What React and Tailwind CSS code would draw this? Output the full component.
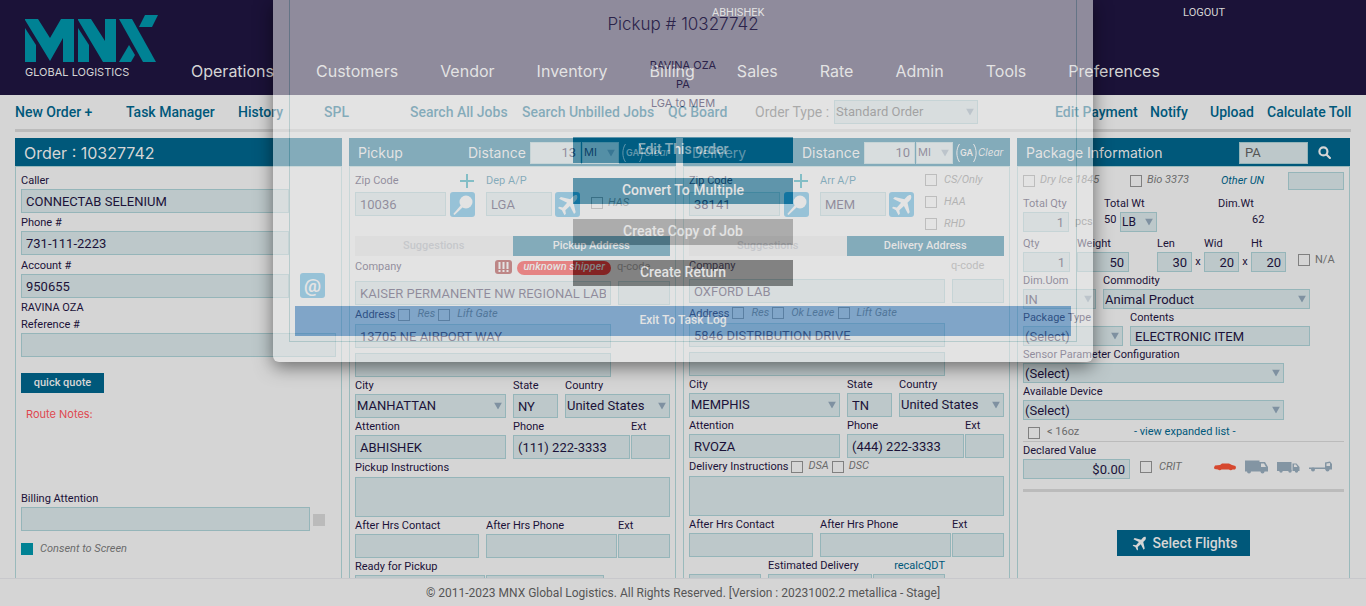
import React, { useId } from "react";

const box = "block w-full min-w-0 rounded-none border border-[#95b5b9] bg-[#bdc8ca] text-[13px] text-[#1b1238] outline-none";

function Label({ children, htmlFor, className = "text-[#1b1238]" }) {
  return (
    <label htmlFor={htmlFor} className={`flex h-[17px] items-center pt-[2px] text-[11px] whitespace-nowrap ${className}`}>
      {children}
    </label>
  );
}

function Text({ label, name, value = "", className = "", labelClass, h = "h-6", align = "px-1 text-left" }) {
  const id = useId();
  return (
    <div className={`min-w-0 ${className}`}>
      {label && <Label htmlFor={id} className={labelClass}>{label}</Label>}
      <input id={id} aria-label={name} defaultValue={value} className={`${box} ${h} ${align}`} />
    </div>
  );
}

function Select({ label, name, value, className = "", h = "h-6", color = "" }) {
  const id = useId();
  return (
    <div className={`min-w-0 ${className}`}>
      {label && <Label htmlFor={id}>{label}</Label>}
      <div className="relative">
        <select id={id} aria-label={name} className={`${box} ${h} appearance-none pl-px ${color}`}>
          <option>{value}</option>
        </select>
        <svg viewBox="0 0 8 7" className="pointer-events-none absolute top-1/2 right-1 h-[7px] w-2 -translate-y-1/2 fill-[#7f91a1]">
          <path d="M0 0h8L4 7z" />
        </svg>
      </div>
    </div>
  );
}

function Check({ label, className = "", italic = "italic", gap = "gap-[5px]" }) {
  return (
    <label className={`flex items-center text-[11px] whitespace-nowrap text-[#6b6b6b] ${italic} ${gap} ${className}`}>
      <input type="checkbox" className="h-3 w-3 shrink-0 appearance-none border border-[#808080]" />
      {label}
    </label>
  );
}

function Plane({ className }) {
  return (
    <svg viewBox="0 0 24 24" className={className} fill="currentColor" aria-hidden="true">
      <path d="M21.6 1.2c-1.300-.5-2.800.2-3.900 1.300L14.600 5.800 4.200 3.300 2.300 5.100l8.700 4.500-4.600 5-3.900-.6L1 15.400l4.400 2.200.5 1.100 2.300 4.400 1.500-1.500-.6-3.900 5-4.600 4.500 8.700 1.800-1.900-2.400-10.400 3.200-3.200c1.100-1.200 1.300-3.600.4-5.100z" />
    </svg>
  );
}

function Logo() {
  return (
    <svg viewBox="0 0 134 48" className="h-12 w-[134px]" fill="#008294" role="img" aria-label="MNX">
      <path d="M0 4h13l12 19L36 4h13v43H38V23L25 46 0 5z" />
      <path d="M0 13l11 17v17H0z" />
      <path d="M53 4h13l14 22V4h11v43H78L53 5z" />
      <path d="M53 13l11 17v17H53z" />
      <path d="M94 4h13l24 43h-13z" />
      <path d="M104 30l6 10-4 7H94z" />
      <path d="M120 0h13l-6 12h-13z" />
    </svg>
  );
}

function Magnifier() {
  return (
    <button aria-label="Look up zip code" className="h-[25px] w-[25px] shrink-0 rounded-[3px] bg-[#2c8cbb]">
      <svg viewBox="0 0 25 25" className="h-full w-full" fill="#d5d5d5">
        <circle cx="16" cy="10" r="6.500" />
        <path d="M11 13l2 2-8.500 8-1.200-1z" />
      </svg>
    </button>
  );
}

function PlaneButton() {
  return (
    <button aria-label="Look up airport" className="ml-[3px] flex h-[25px] w-[25px] shrink-0 items-center justify-center rounded-[3px] bg-[#2c8cbb] text-[#d5d5d5]">
      <Plane className="h-[22px] w-[22px]" />
    </button>
  );
}

function PanelHead({ children }) {
  return <div className="flex h-7 items-center bg-[#00587a] pt-px pl-[9px] font-['Inter',sans-serif] text-[14px] text-[#d5d5d5]">{children}</div>;
}

function StopHead({ title, distance }) {
  return (
    <PanelHead>
      <h2 className="w-[110px]">{title}</h2>
      <span className="w-[62px]">Distance</span>
      <Text name={`${title} distance`} value={distance} h="h-[22px]" align="px-1 text-right" className="w-[51px] font-['Roboto',sans-serif]" />
      <Select name={`${title} distance unit`} value="MI" h="h-[22px]" color="text-[11px]!" className="ml-px w-[37px]" />
      <span className="ml-[3px] flex w-[22px] items-center">
        <svg viewBox="0 0 4 18" className="h-[18px] w-1" fill="none" stroke="currentColor"><path d="M3.500 0C0 5 0 13 3.500 18" /></svg>
        <span className="text-[9px] font-semibold">GA</span>
        <svg viewBox="0 0 4 18" className="h-[18px] w-1" fill="none" stroke="currentColor"><path d="M.5 0C4 5 4 13 .5 18" /></svg>
      </span>
      <button className="text-[10px] italic">Clear</button>
    </PanelHead>
  );
}

const body = "flex-1 border border-[#9ababc] px-[5px]";

function OrderPanel() {
  return (
    <section className="flex min-w-0 flex-col">
      <PanelHead><h2 className="text-[16px]">Order : 10327742</h2></PanelHead>
      <div className={`${body} pt-[5px]`}>
        <Text label="Caller" value="CONNECTAB SELENIUM" className="w-[268px]" />
        <Text label="Phone #" value="731-111-2223" className="mt-px w-[268px]" />
        <div className="mt-px flex items-end gap-[11px]">
          <Text label="Account #" value="950655" className="mt-px w-[268px]" />
          <button aria-label="Email" className="h-[25px] w-[25px] rounded-[3px] bg-[#2c8cbb] text-[19px] leading-[22px] font-bold text-[#d5d5d5]">@</button>
        </div>
        <p className="mt-px flex h-[17px] items-center pt-[2px] text-[11px] text-[#1b1238]">RAVINA OZA</p>
        <Text label="Reference #" />
        <button className="mt-4 h-5 w-[83px] bg-[#00587a] text-[11px] font-medium text-[#d5d5d5]">quick quote</button>
        <p className="mt-[13px] h-[84px] pl-[5px] font-['Inter',sans-serif] text-[11px] text-[#df4850]">Route Notes:</p>
        <div className="flex items-end gap-[3px]">
          <Text label="Billing Attention" className="w-[289px]" />
          <span className="mb-[5px] h-3 w-3 bg-[#bbb]" />
        </div>
        <label className="mt-3 flex h-3 items-center gap-[7px] text-[11px] text-[#6b6b6b] italic">
          <input type="checkbox" defaultChecked className="h-3 w-3 appearance-none bg-[#008294]" />
          Consent to Screen
        </label>
      </div>
    </section>
  );
}

function StopPanel({ kind }) {
  const pickup = kind === "Pickup";
  return (
    <section className="flex min-w-0 flex-col">
      <StopHead title={kind} distance={pickup ? "13" : "10"} />
      <div className={`${body} pt-1`}>
        <div className="flex h-[65px] items-start pt-px">
          <div className="w-[131px]">
            <div className="mb-[3px] flex items-center justify-between pr-3">
              <Label htmlFor={`${kind}-zip`}>Zip Code</Label>
              <svg viewBox="0 0 14 14" className="h-[14px] w-[14px]" stroke="#008294" strokeWidth="2"><path d="M7 0v14M0 7h14" /></svg>
            </div>
            <div className="flex">
              <input id={`${kind}-zip`} defaultValue={pickup ? "10036" : "38141"} className={`${box} mr-1 h-6 flex-1 px-1`} />
              <span className="mr-[11px]"><Magnifier /></span>
            </div>
          </div>
          <div className="w-[94px]">
            <div className="mb-[3px]"><Label htmlFor={`${kind}-ap`} className="text-[#00587a]">{pickup ? "Dep A/P" : "Arr A/P"}</Label></div>
            <div className="flex">
              <input id={`${kind}-ap`} defaultValue={pickup ? "LGA" : "MEM"} className={`${box} h-6 flex-1 px-1`} />
              <PlaneButton />
            </div>
          </div>
          <div className={pickup ? "ml-[11px] pt-[25px]" : "ml-[11px] flex flex-col gap-[10px] pt-[2px]"}>
            {(pickup ? ["HAS"] : ["CS/Only", "HAA", "RHD"]).map((t) => <Check key={t} label={t} className="h-3" gap={pickup ? "gap-[5px]" : "gap-[7px]"} />)}
          </div>
        </div>
        <div className="flex h-5 text-[11px] font-medium">
          <button className="flex-1 bg-[#c8c8c8] text-[#9498a0]">Suggestions</button>
          <button className="flex-1 bg-[#00587a] text-[#d5d5d5]">{kind} Address</button>
        </div>
        <div className={`flex items-start ${pickup ? "h-[25px] pt-[2px]" : "h-[23px] pt-px"}`}>
          <div className="flex w-[262px] items-center">
            <Label htmlFor={`${kind}-company`}>Company</Label>
            {pickup && (
              <>
                <svg viewBox="0 0 17 14" className="ml-auto h-[14px] w-[17px]">
                  <rect width="17" height="14" rx="3" fill="#810606" />
                  <path d="M4.500 2v7M8.500 2v7M12.500 2v7M4.500 10v2M8.500 10v2M12.500 10v2" stroke="#d5d5d5" strokeWidth="2" />
                </svg>
                <span className="mt-[2px] mr-[6px] ml-[5px] flex h-[14px] items-center rounded-full bg-[#d90000] px-[6px] text-[11px] font-medium text-[#d5d5d5] italic">unknown shipper</span>
              </>
            )}
          </div>
          <Label htmlFor={`${kind}-q`} className="text-[#808080]">q-code</Label>
        </div>
        <div className="flex gap-[7px]">
          <input id={`${kind}-company`} defaultValue={pickup ? "KAISER PERMANENTE NW REGIONAL LAB" : "OXFORD LAB"} className={`${box} h-6 flex-1 px-1`} />
          <span className="w-[52px]"><input id={`${kind}-q`} className={`${box} h-6`} /></span>
        </div>
        <div className={`flex items-center gap-[3px] ${pickup ? "h-[19px]" : "h-5"}`}>
          <Label htmlFor={`${kind}-addr`}>Address</Label>
          {(pickup ? ["Res", "Lift Gate"] : ["Res", "Ok Leave", "Lift Gate"]).map((t) => <Check key={t} label={t} gap="gap-[7px]" />)}
        </div>
        <div className="flex w-[256px] flex-col gap-[5px]">
          <input id={`${kind}-addr`} defaultValue={pickup ? "13705 NE AIRPORT WAY" : "5846 DISTRIBUTION DRIVE"} className={`${box} h-6 px-1`} />
          <input aria-label="Address line 2" className={`${box} h-6 px-1`} />
        </div>
        <div className="flex gap-[7px]">
          <Select label="City" value={pickup ? "MANHATTAN" : "MEMPHIS"} className="flex-1" />
          <Text label="State" value={pickup ? "NY" : "TN"} className="w-[45px]" />
          <Select label="Country" value="United States" className="w-[105px]" />
        </div>
        <div className="flex">
          <Text label="Attention" value={pickup ? "ABHISHEK" : "RVOZA"} className="mr-[7px] flex-1" />
          <Text label="Phone" value={pickup ? "(111) 222-3333" : "(444) 222-3333"} className="mr-px w-[117px]" />
          <Text label="Ext" className="w-[39px]" />
        </div>
        <div className="flex items-center gap-[3px]">
          <Label htmlFor={`${kind}-ins`}>{kind} Instructions</Label>
          {!pickup && ["DSA", "DSC"].map((t) => <Check key={t} label={t} />)}
        </div>
        <textarea id={`${kind}-ins`} className={`${box} mt-px h-10 resize-none`} />
        <div className="flex">
          <Text label="After Hrs Contact" className="mr-[7px] w-[124px]" />
          <Text label="After Hrs Phone" className="mr-px flex-1" />
          <Text label="Ext" className="w-[52px]" />
        </div>
        {pickup ? (
          <div className="flex items-end gap-px">
            <Text label="Ready for Pickup" className="w-[130px]" />
            <Text name="Ready time" className="w-[118px]" />
          </div>
        ) : (
          <div className="flex items-end">
            <Text name="Delivery date" className="mr-[7px] w-[72px]" />
            <Text label="Estimated Delivery" className="mr-px w-[104px]" />
            <div className="w-[72px]">
              <a href="#recalc" className="flex h-[17px] items-center justify-end pt-[2px] text-[11px] text-[#00587a]">recalcQDT</a>
              <input aria-label="Estimated delivery time" className={`${box} h-6`} />
            </div>
          </div>
        )}
      </div>
    </section>
  );
}

const r = "px-1 text-right";

function PackagePanel() {
  return (
    <section className="flex min-w-0 flex-col">
      <PanelHead>
        <h2 className="flex-1">Package Information</h2>
        <input aria-label="Package search" defaultValue="PA" className="h-[22px] w-[69px] border border-[#95b5b9] bg-[#bdc8ca] px-[5px] font-['Roboto',sans-serif] text-[13px] text-[#555]" />
        <button aria-label="Search" className="mr-[19px] ml-[10px] h-[13px] w-[13px]">
          <svg viewBox="0 0 12 12" fill="none" stroke="currentColor" strokeWidth="2" strokeLinecap="round"><circle cx="5" cy="5" r="3.700" /><path d="M8 8l3 3" /></svg>
        </button>
      </PanelHead>
      <div className={`${body} pt-1`}>
        <div className="mt-px flex h-[18px] items-center">
          <Check label="Dry Ice 1845" className="w-[107px] pb-px" />
          <Check label="Bio 3373" className="w-[91px] pb-px" />
          <label htmlFor="other-un" className="flex-1 text-[11px] text-[#00587a] italic">Other UN</label>
          <input id="other-un" className="h-[18px] w-14 border border-[#95b5b9] bg-[#bdc8ca]" />
        </div>
        <div className="mt-[5px] flex">
          <Text label="Total Qty" value="1" h="h-5" align={r} className="w-[46px]" />
          <span className="w-[35px] self-end pb-[2px] pl-[6px] text-[11px] text-[#6b6b6b]">pcs</span>
          <div className="w-[114px] text-[11px] text-[#1b1238]">
            <Label htmlFor="wt">Total Wt</Label>
            <div className="flex">
              <output id="wt" className="w-4">50</output>
              <Select name="Weight unit" value="LB" h="h-5" color="text-[12px]!" className="w-[37px]" />
            </div>
          </div>
          <div className="text-[11px] text-[#1b1238]">
            <p className="flex h-[17px] items-center pt-[2px]">Dim.Wt</p>
            <p className="pl-[34px]">62</p>
          </div>
        </div>
        <div className="mt-[3px] flex items-end">
          <Text label="Qty" value="1" h="h-5" align={r} className="mr-[7px] w-[47px]" />
          <Text label="Weight" value="50" h="h-5" align={r} className="mr-7 w-[52px]" />
          <Text label="Len" value="30" h="h-5" align={r} className="w-[35px]" />
          <span className="w-3 pb-[2px] text-center text-[11px] text-[#1b1238]">x</span>
          <Text label="Wid" value="20" h="h-5" align={r} className="w-[35px]" />
          <span className="w-3 pb-[2px] text-center text-[11px] text-[#1b1238]">x</span>
          <Text label="Ht" value="20" h="h-5" align={r} className="w-[35px]" />
          <Check label="N/A" italic="" className="mb-1 ml-3" />
        </div>
        <div className="flex gap-[7px]">
          <Select label="Dim.Uom" value="IN" h="h-5" className="w-[73px]" />
          <Select label="Commodity" value="Animal Product" h="h-5" className="w-[207px]" />
        </div>
        <div className="flex gap-[7px]">
          <Select label="Package Type" value="(Select)" h="h-5" className="w-[100px]" />
          <Text label="Contents" value="ELECTRONIC ITEM" h="h-5" className="w-[180px]" />
        </div>
        <Select label="Sensor Parameter Configuration" value="(Select)" h="h-5" className="w-[261px]" />
        <Select label="Available Device" value="(Select)" h="h-5" className="w-[261px]" />
        <div className="flex h-[22px] items-center border-b border-[#bbb] pt-1 pl-[5px]">
          <Check label="< 16oz" italic="" gap="gap-[7px]" className="w-[106px]" />
          <a href="#list" className="text-[11px] text-[#00587a]">- view expanded list -</a>
        </div>
        <div className="flex items-end">
          <Text label="Declared Value" value="$0.00" h="h-5" align={r} className="w-[107px]" />
          <Check label="CRIT" gap="gap-[7px]" className="mb-1 ml-[10px] w-[74px]" />
          <div className="mb-[5px] flex items-center gap-[9px]">
            <svg viewBox="0 0 22 8" className="h-2 w-[22px]" fill="#d6482f"><path d="M0 4.500l1-2L6 2l2-1.500h7L18 2l3.500 1 .5 2-1 1.500h-2.500a2 1.500 0 0 1-3.500 0H7.500a2 1.500 0 0 1-3.500 0L.5 6z" /></svg>
            <svg viewBox="0 0 23 14" className="h-[14px] w-[23px]" fill="#8395a3"><path fillRule="evenodd" d="M0 .5h14.500V2H20l3 5v4.500H0zM16 3.500V7h5l-2-3.500z" /><circle cx="4" cy="11.500" r="2" /><circle cx="17.500" cy="11.500" r="2" /></svg>
            <svg viewBox="0 0 23 14" className="h-[14px] w-[23px]" fill="#8395a3"><path fillRule="evenodd" d="M0 2h14.500v9H0zM15.500 3.500h4l3 3.500v4h-7zM17 4.500v2.500h3.500l-1.500-2.500z" /><circle cx="4" cy="11" r="1.700" /><circle cx="13" cy="11" r="1.700" /><circle cx="19.500" cy="11" r="1.700" /></svg>
            <svg viewBox="0 0 23 14" className="h-[14px] w-[23px]" fill="#8395a3"><path fillRule="evenodd" d="M0 7.500h16V2.500l5-1 2 2.500v5.500h-7V9H0zM17.500 3.500v2.500H21V3z" /><circle cx="4" cy="9.500" r="2" /><circle cx="18.500" cy="9.500" r="2" /></svg>
          </div>
        </div>
        <div className="mt-[10px] border-b-[3px] border-[#bbb]" />
        <button className="mx-auto mt-[38px] flex h-[26px] w-[133px] items-center justify-center gap-[6px] bg-[#00587a] pl-[2px] text-[14px] font-medium text-[#d5d5d5]">
          <Plane className="h-[15px] w-[15px]" />
          Select Flights
        </button>
      </div>
    </section>
  );
}

const nav = ["Operations", "Customers", "Vendor", "Inventory", "Billing", "Sales", "Rate", "Admin", "Tools", "Preferences"];
const left = ["New Order +", "Task Manager", "History", "SPL", "Search All Jobs", "Search Unbilled Jobs", "QC Board"];
const right = ["Edit Payment", "Notify", "Upload", "Calculate Toll"];
const act = "h-[26px] w-[220px] pb-[2px] text-[14px] font-medium text-[#efefef]";

function OrderDialog() {
  return (
    <div role="dialog" aria-labelledby="dialog-title" className="absolute inset-x-0 top-0 mx-auto w-[820px] rounded-b-md bg-[#efefef] px-4 pb-5 opacity-55 shadow-[0_5px_18px_rgba(0,0,0,0.9)]">
      <div className="flex flex-col items-center border-x border-b border-[#a0c4c6] px-[5px] pt-[14px] pb-[5px] text-[#39325a]">
        <h1 id="dialog-title" className="h-10 font-['Inter',sans-serif] text-[17px] leading-5 font-light">Pickup # 10327742</h1>
        <div className="h-[83px] text-center font-['Inter',sans-serif] text-[11px] leading-[19px]">
          <p className="mt-[2px]">RAVINA OZA</p>
          <p>PA</p>
          <p>LGA to MEM</p>
        </div>
        <div className="mb-5 flex flex-col gap-[15px]">
          <button className={`${act} bg-[#00628a]`}>Edit This order</button>
          <button className={`${act} bg-[#00628a]`}>Convert To Multiple</button>
          <button className={`${act} bg-[#8c8c8c]`}>Create Copy of Job</button>
          <button className={`${act} bg-[#404040]`}>Create Return</button>
        </div>
        <button className="h-[30px] w-full bg-[#3c7fbf] pb-[2px] text-[12px] font-medium text-[#efefef]">Exit To Task Log</button>
      </div>
    </div>
  );
}

export default function App() {
  return (
    <div className="relative flex h-screen flex-col overflow-hidden bg-[#d5d5d5] font-['Roboto',sans-serif]">
      <header className="flex h-[95px] shrink-0 bg-[#1b1238] pt-[15px] pl-[25px] text-[#d5d5d5]">
        <div className="w-[166px] shrink-0">
          <Logo />
          <p className="mt-px font-['Inter',sans-serif] text-[11px] leading-4">GLOBAL LOGISTICS</p>
        </div>
        <div className="-mt-[9px] flex-1">
          <div className="flex h-[14px] items-center justify-between pr-[141px] pl-[521px] text-[11px]">
            <span>ABHISHEK</span>
            <a href="#logout">LOGOUT</a>
          </div>
          <nav className="mt-[39px] flex max-w-[969px] justify-between font-['Inter',sans-serif] text-[16px]">
            {nav.map((n) => <a key={n} href="#nav">{n}</a>)}
          </nav>
        </div>
      </header>
      <div className="mx-[15px] grid h-[37px] shrink-0 grid-cols-[111fr_112fr_86fr_86fr_112fr_146fr_87fr_79fr_221fr_95fr_60fr_57fr_84fr] items-center border-b-[3px] border-[#bbb] text-[14px] whitespace-nowrap text-[#00587a]">
        {left.map((t) => <a key={t} href="#menu" className="min-w-0 font-medium">{t}</a>)}
        <span className="min-w-0 text-[#555]">Order Type :</span>
        <Select name="Order type" value="Standard Order" color="text-[#444]!" className="w-[144px]" />
        {right.map((t) => <a key={t} href="#menu" className="min-w-0 font-medium">{t}</a>)}
      </div>
      <main className="mt-[6px] mr-4 ml-[15px] grid min-h-0 flex-1 grid-cols-[327fr_327fr_327fr_333fr] gap-[7px] overflow-hidden">
        <OrderPanel />
        <StopPanel kind="Pickup" />
        <StopPanel kind="Delivery" />
        <PackagePanel />
      </main>
      <footer className="relative flex h-7 shrink-0 items-center justify-center border-t border-[#c8c8cc] bg-[#d5d5d5] text-[12px] text-[#555]">
        © 2011-2023 MNX Global Logistics. All Rights Reserved. [Version : 20231002.2 metallica - Stage]
      </footer>
      <OrderDialog />
    </div>
  );
}
